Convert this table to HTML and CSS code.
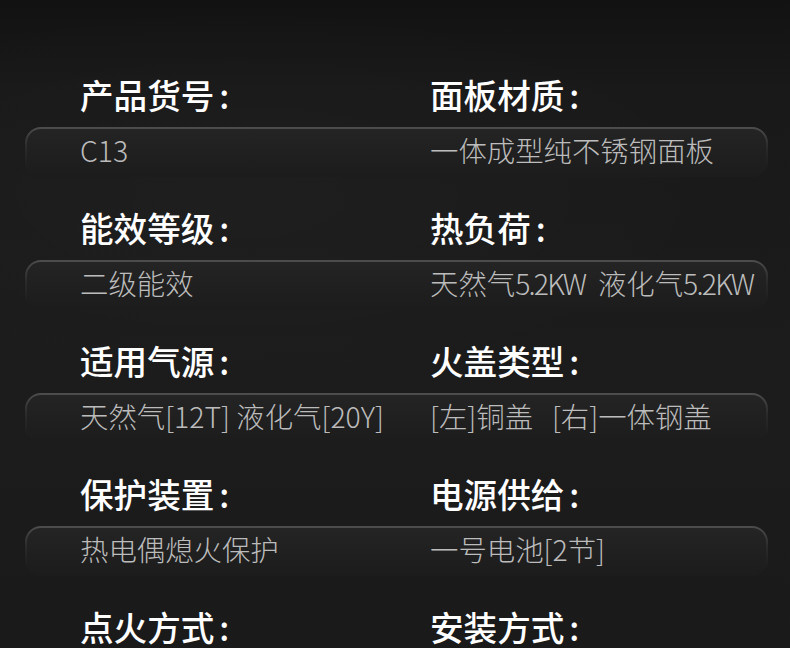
FILE: index.html
```html
<!DOCTYPE html>
<html lang="zh-CN">
<head>
<meta charset="utf-8">
<title>产品参数</title>
<link rel="stylesheet" href="styles.css">
</head>
<body>
<main class="specs">
  <section class="spec">
    <div class="labels"><h3>产品货号<span class="colon">:</span></h3><h3>面板材质<span class="colon">:</span></h3></div>
    <div class="pill"><p>C13</p><p>一体成型纯不锈钢面板</p></div>
  </section>
  <section class="spec">
    <div class="labels"><h3>能效等级<span class="colon">:</span></h3><h3>热负荷<span class="colon">:</span></h3></div>
    <div class="pill"><p>二级能效</p><p>天然气<span class="unit">5.2KW</span>&nbsp; 液化气<span class="unit">5.2KW</span></p></div>
  </section>
  <section class="spec">
    <div class="labels"><h3>适用气源<span class="colon">:</span></h3><h3>火盖类型<span class="colon">:</span></h3></div>
    <div class="pill"><p>天然气[12T] 液化气[20Y]</p><p>[左]铜盖&nbsp;&nbsp; [右]一体钢盖</p></div>
  </section>
  <section class="spec">
    <div class="labels"><h3>保护装置<span class="colon">:</span></h3><h3>电源供给<span class="colon">:</span></h3></div>
    <div class="pill"><p>热电偶熄火保护</p><p>一号电池[2节]</p></div>
  </section>
  <section class="spec spec-last">
    <div class="labels"><h3>点火方式<span class="colon">:</span></h3><h3>安装方式<span class="colon">:</span></h3></div>
  </section>
</main>
</body>
</html>
```

FILE: styles.css
```css
html, body {
  margin: 0;
  padding: 0;
}
body {
  width: 790px;
  height: 648px;
  overflow: hidden;
  background:
    radial-gradient(ellipse 500px 200px at 30% 30%, rgba(255,255,255,0.02), transparent),
    linear-gradient(to bottom, #121212 0px, #191919 90px, #1c1c1c 400px, #1a1a1a 648px);
  font-family: "Noto Sans CJK SC", "Noto Sans", sans-serif;
}
.specs {
  padding-top: 75px;
}
.spec {
  height: 133px;
}
.spec-last {
  height: auto;
}
.labels {
  display: grid;
  grid-template-columns: 350px 1fr;
  padding-left: 80px;
  height: 40px;
  margin-bottom: 12px;
}
.spec-last .labels {
  margin-bottom: 0;
  height: 38px;
}
.labels h3 {
  margin: 0;
  font-size: 33.6px;
  line-height: 38px;
  font-weight: 500;
  color: #ffffff;
  padding-top: 1px;
}
.colon {
  margin-left: 5px;
}
.pill {
  display: grid;
  grid-template-columns: 350px 1fr;
  margin-left: 25px;
  width: 743px;
  height: 50px;
  box-sizing: border-box;
  padding: 3px 0 0 53px;
  border: 2px solid transparent;
  border-bottom: 0;
  border-radius: 16px 16px 14px 14px;
  background:
    linear-gradient(to bottom, #242424, #1f1f1f 60%, #1c1c1c) padding-box,
    linear-gradient(to bottom, #4e4e4e, rgba(60,60,60,0.5) 40%, rgba(40,40,40,0) 90%) border-box;
}
.pill p {
  margin: 0;
  font-size: 28.4px;
  line-height: 36px;
  font-weight: 300;
  color: #bcbcbc;
  white-space: nowrap;
}
.unit {
  letter-spacing: -1.8px;
}
```
